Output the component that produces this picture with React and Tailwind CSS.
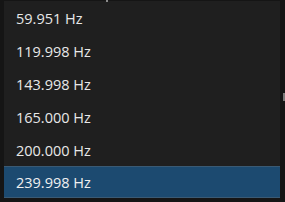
const rates = ['59.951 Hz', '119.998 Hz', '143.998 Hz', '165.000 Hz', '200.000 Hz', '239.998 Hz']

export default function App() {
  const selected = 5
  return (
    <div className="relative w-[285px] h-[202px] bg-[#151515] pl-[4px] pt-[1px] overflow-hidden">
      <div className="w-[276px] h-[197px] bg-[#1f1f1f] flex flex-col">
        {rates.map((r, i) => (
          <div
            key={r}
            className={
              i === selected
                ? 'h-[32px] shrink-0 flex items-center pl-[12px] pt-[2px] bg-[#1c4a70] border-y border-[#3a5a74] text-[#f0f0f0]'
                : 'h-[33px] shrink-0 flex items-center pl-[12px] pt-[3px] text-[#e8e8e8]'
            }
            style={{ fontFamily: '"Open Sans", "Noto Sans", sans-serif' }}
          >
            <span className="text-[14.5px] leading-none">{r}</span>
          </div>
        ))}
      </div>
      <div className="absolute left-[106px] top-0 w-[2px] h-[2px] bg-[#8a8a8a]" />
      <div className="absolute right-0 top-[93px] w-[2px] h-[8px] bg-[#7a7a7a]" />
    </div>
  )
}
